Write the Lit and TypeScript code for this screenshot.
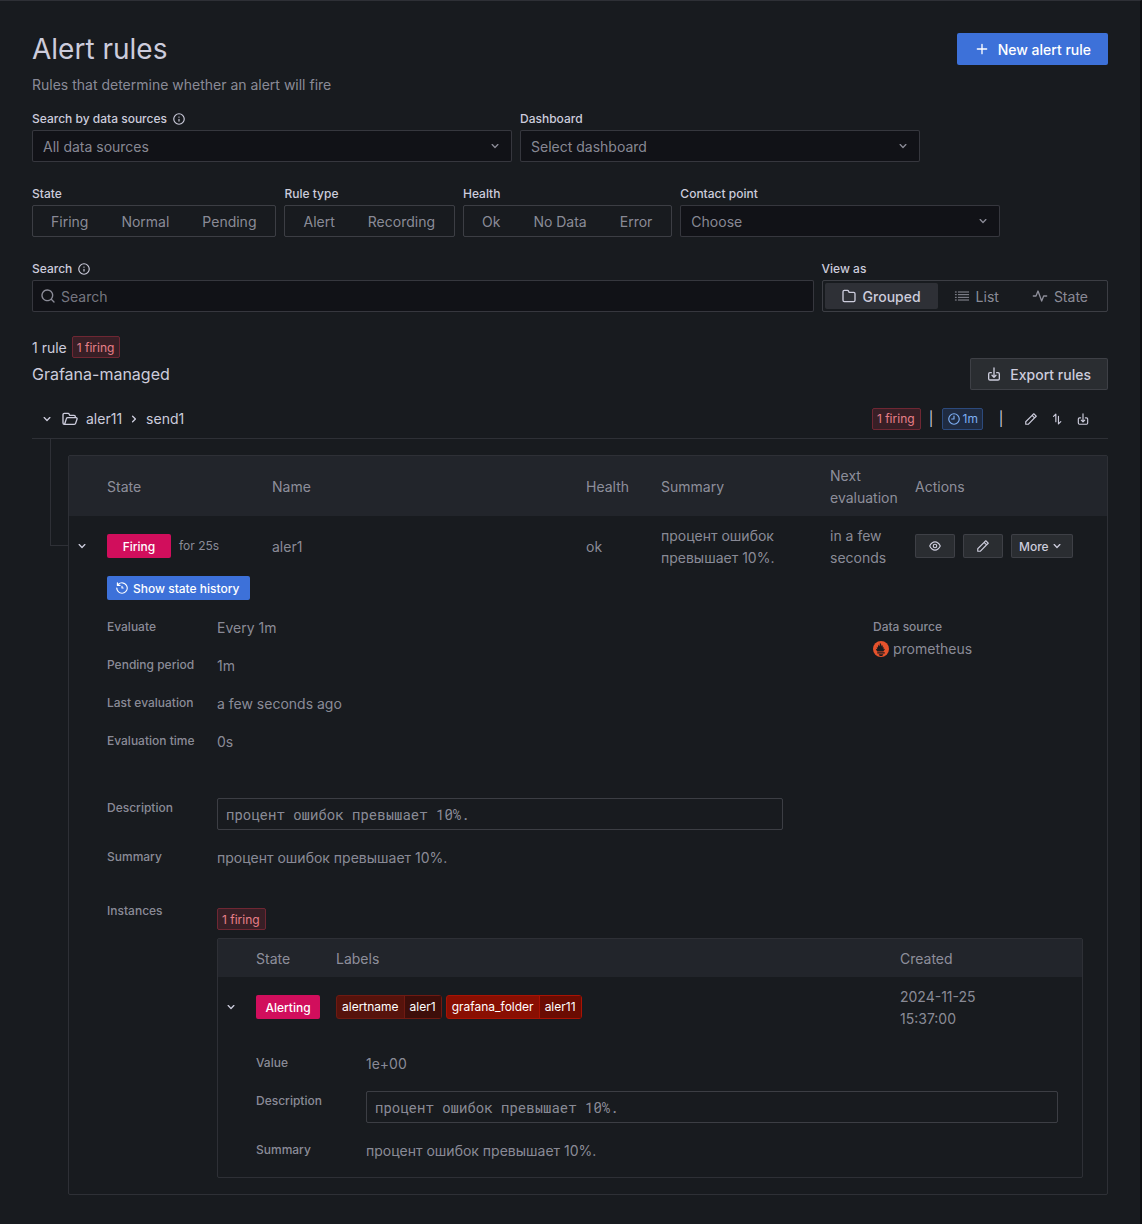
import { LitElement, html, css, svg } from "lit";
import { customElement, property } from "lit/decorators.js";

const GLYPHS: Record<string, unknown> = {
  plus: svg`<path d="M19,11H13V5a1,1,0,0,0-2,0v6H5a1,1,0,0,0,0,2h6v6a1,1,0,0,0,2,0V13h6a1,1,0,0,0,0-2Z"/>`,
  down: svg`<path d="M17,9.17a1,1,0,0,0-1.41,0L12,12.71,8.46,9.17a1,1,0,0,0-1.41,0,1,1,0,0,0,0,1.42l4.24,4.24a1,1,0,0,0,1.42,0L17,10.59A1,1,0,0,0,17,9.17Z"/>`,
  right: svg`<path d="M14.83,11.29,10.59,7.05a1,1,0,0,0-1.42,0,1,1,0,0,0,0,1.41L12.71,12,9.17,15.54a1,1,0,0,0,0,1.41,1,1,0,0,0,.71.29,1,1,0,0,0,.71-.29l4.24-4.24A1,1,0,0,0,14.83,11.29Z"/>`,
  info: svg`<path d="M12,2A10,10,0,1,0,22,12,10,10,0,0,0,12,2Zm0,18a8,8,0,1,1,8-8A8,8,0,0,1,12,20Zm0-8.5a1,1,0,0,0-1,1v3a1,1,0,0,0,2,0v-3A1,1,0,0,0,12,11.5Zm0-4a1.25,1.25,0,1,0,1.25,1.25A1.25,1.25,0,0,0,12,7.5Z"/>`,
  search: svg`<path d="M21.71,20.29,18,16.61A9,9,0,1,0,16.61,18l3.68,3.68a1,1,0,0,0,1.42,0A1,1,0,0,0,21.71,20.29ZM11,18a7,7,0,1,1,7-7A7,7,0,0,1,11,18Z"/>`,
  folder: svg`<path d="M19,5.5H12.72l-.32-1a3,3,0,0,0-2.84-2H5a3,3,0,0,0-3,3v13a3,3,0,0,0,3,3H19a3,3,0,0,0,3-3V8.5A3,3,0,0,0,19,5.5Zm1,13a1,1,0,0,1-1,1H5a1,1,0,0,1-1-1V5.5a1,1,0,0,1,1-1H9.56a1,1,0,0,1,.95.68l.54,1.64A1,1,0,0,0,12,7.5h7a1,1,0,0,1,1,1Z"/>`,
  folderOpen: svg`<g class="stroke"><path d="M20 10V8.500a2 2 0 0 0-2-2h-6.500L10.600 4.400a1.500 1.500 0 0 0-1.400-.9H3.500a2 2 0 0 0-2 2v12.500a2 2 0 0 0 2 2h15a2 2 0 0 0 1.900-1.400L22.600 12a1.500 1.500 0 0 0-1.400-2H8.500a2 2 0 0 0-1.900 1.400L4 19.600"/></g>`,
  list: svg`<g class="stroke thin"><path d="M6.500 6H22M6.500 10H22M6.500 14H22M6.500 18H22M2 6H3.500M2 10H3.500M2 14H3.500M2 18H3.500"/></g>`,
  pulse: svg`<g class="stroke"><path d="M2 12H6L9 4.500L14.500 19.500L17.500 12H22"/></g>`,
  pen: svg`<path d="M22,7.24a1,1,0,0,0-.29-.71L17.47,2.29A1,1,0,0,0,16.76,2a1,1,0,0,0-.71.29L13.22,5.12h0L2.29,16.05a1,1,0,0,0-.29.71V21a1,1,0,0,0,1,1H7.24A1,1,0,0,0,8,21.71L18.87,10.78h0L21.71,8a1.19,1.19,0,0,0,.22-.33,1,1,0,0,0,0-.24.7.7,0,0,0,0-.14ZM6.83,20H4V17.17l9.93-9.93,2.83,2.83ZM18.17,8.66,15.34,5.83l1.42-1.41,2.82,2.82Z"/>`,
  clock: svg`<path d="M12,2A10,10,0,1,0,22,12,10,10,0,0,0,12,2Zm0,18a8,8,0,1,1,8-8A8,8,0,0,1,12,20ZM12,6a1,1,0,0,0-1,1v4H8a1,1,0,0,0,0,2h4a1,1,0,0,0,1-1V7A1,1,0,0,0,12,6Z"/>`,
  history: svg`<path d="M12,2A10,10,0,0,0,5.12,4.77V3a1,1,0,0,0-2,0V7.5a1,1,0,0,0,1,1H8.62a1,1,0,0,0,0-2H6.22A8,8,0,1,1,4,12a1,1,0,0,0-2,0A10,10,0,1,0,12,2Zm0,6a1,1,0,0,0-1,1v3a1,1,0,0,0,1,1h2a1,1,0,0,0,0-2H13V9A1,1,0,0,0,12,8Z"/>`,
  eye: svg`<path d="M21.92,11.6C19.9,6.91,16.1,4,12,4S4.1,6.91,2.08,11.6a1,1,0,0,0,0,.8C4.1,17.09,7.9,20,12,20s7.9-2.91,9.92-7.6A1,1,0,0,0,21.92,11.6ZM12,18c-3.17,0-6.17-2.29-7.9-6C5.83,8.29,8.83,6,12,6s6.17,2.29,7.9,6C18.17,15.71,15.17,18,12,18ZM12,8a4,4,0,1,0,4,4A4,4,0,0,0,12,8Zm0,6a2,2,0,1,1,2-2A2,2,0,0,1,12,14Z"/>`,
  download: svg`<path d="M8.29,13.29a1,1,0,0,0,0,1.42l3,3a1,1,0,0,0,1.42,0l3-3a1,1,0,0,0-1.42-1.42L13,14.59V3a1,1,0,0,0-2,0V14.59L9.71,13.29A1,1,0,0,0,8.29,13.29ZM18,9H16a1,1,0,0,0,0,2h2a1,1,0,0,1,1,1v7a1,1,0,0,1-1,1H6a1,1,0,0,1-1-1V12a1,1,0,0,1,1-1H8A1,1,0,0,0,8,9H6a3,3,0,0,0-3,3v7a3,3,0,0,0,3,3H18a3,3,0,0,0,3-3V12A3,3,0,0,0,18,9Z"/>`,
  swap: svg`<g class="stroke"><path d="M6 7.500L10 3.500V16.500M18.500 16.500L14.500 20.500V7.500"/></g>`,
  prometheus: svg`<circle cx="12" cy="12" r="12" fill="#e6522c"/><path fill="#181b1f" d="M12 22.400c-1.900 0-3.400-1.200-3.400-2.700h6.800c0 1.500-1.500 2.700-3.400 2.700zM6.400 18.700v-2h11.200v2zM6.400 15.600c-1.600-1.800-2-2.800-2.300-3.800l2.400.5c-.6-1.400-1-2.500-.8-4 .4.900 1 1.500 1.700 1.800-.2-2.300.9-3.200.8-5 .9.700 1.400 2 1.400 3.200.5-1.700.8-3.200.7-5.700 1.700 1.300 2.500 3.700 2.500 5.800.5-.8.700-1.700.6-2.800 1.300 1.300 1.400 3 1.400 4.700.6-.4 1.100-1 1.400-1.800.3 1.400 0 2.600-.7 3.800l2.400-.5c-.3 1.100-.8 2.200-2.300 3.800z"/>`,
};

@customElement("ui-icon")
class UiIcon extends LitElement {
  @property() name = "plus";
  static styles = css`
    :host { display: inline-flex; flex: none; width: 16px; height: 16px; }
    :host([small]) { width: 14px; height: 14px; }
    svg { width: 100%; height: 100%; fill: currentColor; }
    .stroke { fill: none; stroke: currentColor; stroke-width: 2; stroke-linecap: round; stroke-linejoin: round; }
    .thin { stroke-width: 1.500; }
  `;
  render() {
    return html`<svg viewBox="0 0 24 24" aria-hidden="true">${GLYPHS[this.name]}</svg>`;
  }
}

interface Option { text: string; icon?: string; checked?: boolean }

@customElement("app-root")
class AppRoot extends LitElement {
  static styles = css`
    :host {
      --text: #ccccdc;
      --muted: rgba(204, 204, 220, 0.65);
      --weak: rgba(204, 204, 220, 0.12);
      --medium: rgba(204, 204, 220, 0.2);
      display: block;
      box-sizing: border-box;
      min-height: 100vh;
      background: #181b1f;
      color: var(--text);
      border-top: 1px solid var(--weak);
      border-right: 2px solid #0d0e11;
      font: 400 14px/22px Inter, "Liberation Sans", sans-serif;
    }
    * { box-sizing: border-box; }
    main { padding: 32px 32px 29px; }
    h1, h2, p, dl, dd, dt { margin: 0; font-weight: 400; }
    button, input, select { font: inherit; color: inherit; margin: 0; }
    button { cursor: pointer; }

    .head { display: flex; justify-content: space-between; align-items: flex-start; }
    h1 { font-size: 28px; line-height: 32px; }
    .subtitle { margin-top: 8px; line-height: 24px; color: var(--muted); }

    .btn {
      display: inline-flex; align-items: center; gap: 8px; height: 32px; padding: 0 16px 0 15px; color: var(--text);
      border: 1px solid transparent; border-radius: 2px; font-weight: 500; white-space: nowrap;
      background: rgba(204, 204, 220, 0.1);
    }
    .btn span, .radios span, .badge span { padding-top: 1px; }
    .btn.primary { background: #3d71d9; color: #fff; padding: 0 16px; }
    .btn.bordered { border-color: var(--weak); }
    .btn.small { height: 24px; padding: 0 7px; gap: 0; font-size: 12px; }
    .btn.icon-only { width: 40px; justify-content: center; }
    .btn.primary.small { padding: 0 10px 0 7px; gap: 4px; }

    .filters { display: flex; flex-wrap: wrap; gap: 8px; margin-bottom: 24px; }
    .filters.first { margin-top: 14px; }
    .filters.last { flex-wrap: nowrap; }
    .field { display: flex; flex-direction: column; border: 0; margin: 0; padding: 0; min-width: 0; }
    .w-l { width: 480px; } .w-m { width: 400px; } .w-s { width: 320px; } .grow { flex: 1; }
    .label {
      display: flex; align-items: center; gap: 5px; height: 16px; margin-bottom: 3px; padding: 0;
      font-size: 12px; line-height: 16px; font-weight: 500;
    }
    .box {
      display: flex; align-items: center; height: 32px; background: #111217; color: var(--muted);
      border: 1px solid var(--medium); border-radius: 2px;
    }
    .select { display: grid; grid-template-columns: 1fr 32px; }
    .select select {
      grid-area: 1 / 1 / 2 / 3; appearance: none; border: 0; background: none; height: 30px; padding: 1px 32px 0 10px;
    }
    .select ui-icon { grid-area: 1 / 2; justify-self: center; pointer-events: none; }
    .search { padding: 0 7px; gap: 5px; }
    .search input { flex: 1; min-width: 0; border: 0; background: none; outline: none; padding: 0; height: 30px; }
    .search input::placeholder { color: var(--muted); opacity: 0.85; }

    .radios { display: flex; padding: 2px; height: 32px; border: 1px solid var(--medium); border-radius: 2px; }
    .radios label {
      display: flex; flex: auto; align-items: center; gap: 6px; padding: 0 17px 0 16px; color: var(--muted);
      border-radius: 2px; white-space: nowrap; cursor: pointer;
    }
    .radios input { appearance: none; width: 0; height: 0; position: absolute; }
    .radios label:has(input:checked) { background: rgba(204, 204, 220, 0.12); color: var(--text); font-weight: 500; }

    .stats { display: flex; align-items: center; gap: 5px; height: 22px; }
    .stats > span:first-child { padding-top: 1px; }
    .badge {
      display: inline-flex; align-items: center; gap: 2px; height: 22px; padding: 0 5px 0 4px; border-radius: 2px;
      font-size: 12px; line-height: 16px; white-space: nowrap;
      color: #e8808a; background: #381f26; border: 1px solid #6f2733;
    }
    .badge.blue { padding: 0 4px; color: #7eb0f5; background: #1f2b41; border-color: #2c4a7c; }
    .section { display: flex; justify-content: space-between; align-items: flex-start; }
    h2 { font-size: 16px; line-height: 24px; margin-top: 4px; }

    .group {
      display: flex; align-items: center; height: 40px; padding: 0 17px 0 7px; margin-top: 9px;
      border-bottom: 1px solid var(--weak);
    }
    .group .spacer { flex: 1; }
    .toggle, .tool {
      display: inline-flex; align-items: center; justify-content: center; border: 0; padding: 0; background: none;
      width: 16px; height: 16px; color: var(--text);
    }
    .group a { color: inherit; text-decoration: none; }
    .crumbs { display: flex; align-items: center; gap: 4px; margin-left: 7px; }
    .crumbs .path { margin-left: 4px; }
    .right { display: flex; align-items: center; }
    .tools { display: flex; gap: 10px; }
    .bar { width: 21px; text-align: center; }
    .bar.wide { width: 40px; padding-right: 4px; }

    .tree { display: grid; grid-template-columns: 18px 18px minmax(0, 1fr); }
    .guide { grid-column: 2; height: 107px; border: 1px solid var(--weak); border-width: 0 0 1px 1px; }
    .panel { border: 1px solid var(--weak); border-radius: 2px; }
    .outer { grid-column: 3; margin-top: 16px; padding-bottom: 16px; }
    table { width: 100%; table-layout: fixed; border-collapse: collapse; color: var(--muted); }
    th, td { padding: 8px 0; text-align: left; font-weight: 400; vertical-align: middle; }
    th, td.words { padding: 9px 8px 7px 0; }
    th { background: #22252b; }
    .c-toggle { width: 38px; } .c-state { width: 165px; } .c-health { width: 75px; } .c-summary { width: 169px; }
    .c-next { width: 85px; } .c-actions { width: 192px; } .c-istate { width: 80px; } .c-created { width: 182px; }
    td .toggle { display: flex; margin-left: 5px; }
    .row { display: flex; align-items: center; gap: 8px; }
    .fine { font-size: 12px; line-height: 18px; }
    .tag {
      display: inline-flex; align-items: center; justify-content: center; min-width: 64px; height: 24px; padding: 1px 8px 0;
      border-radius: 2px; background: #d10e5c; color: #fff; font-size: 12px; font-weight: 500; vertical-align: top;
    }
    td.details { padding: 0 24px 0 0; vertical-align: top; }
    .split { display: grid; grid-template-columns: minmax(0, 1fr) 210px; gap: 90px; margin-top: 16px; }
    dl.info { display: grid; grid-template-columns: 110px minmax(0, 1fr); row-gap: 16px; }
    dt { font-size: 12px; line-height: 20px; font-weight: 500; }
    dl.texts { margin-top: 45px; }
    dl.instances { margin-top: 32px; }
    .instances .count { display: flex; margin-top: 7px; }
    .well {
      display: block; height: 32px; margin-bottom: 1px; padding: 0 8px; line-height: 32px;
      border: 1px solid var(--medium); border-radius: 2px; font-family: "Roboto Mono", "DejaVu Sans Mono", monospace;
    }
    .inner { margin-top: 8px; padding-bottom: 15px; }
    .source { display: flex; align-items: center; gap: 4px; margin-top: 1px; }
    .labels { display: flex; gap: 4px; }
    .chip {
      display: inline-flex; height: 24px; border: 1px solid #6f1a12; border-radius: 3px; color: #fff;
      font-size: 12px; line-height: 22px; background: #56130c;
    }
    .chip span { padding: 0 5px; }
    .chip .val { border-left: 1px solid #6f1a12; background: #3d0e0a; }
    .chip.hot { background: #890f02; border-color: #a91304; }
    .chip.hot .val { background: #6a0c02; border-color: #a91304; }
    .inst-info { margin: 16px 0 0; }
  `;

  private select(id: string, label: string, value: string, width: string, info = false) {
    return html`<div class="field ${width}">
      <label class="label" for=${id}>${label}${info ? html`<ui-icon small name="info"></ui-icon>` : ""}</label>
      <div class="box select"><select id=${id}><option>${value}</option></select><ui-icon name="down"></ui-icon></div>
    </div>`;
  }

  private radios(name: string, legend: string, options: Option[]) {
    return html`<fieldset class="field">
      <legend class="label">${legend}</legend>
      <div class="radios">
        ${options.map((o) => html`<label>
          <input type="radio" name=${name} ?checked=${o.checked} />${o.icon ? html`<ui-icon name=${o.icon}></ui-icon>` : ""}<span>${o.text}</span>
        </label>`)}
      </div>
    </fieldset>`;
  }

  render() {
    const text = "процент ошибок превышает 10%.";
    return html`<main>
      <header class="head">
        <div><h1>Alert rules</h1><p class="subtitle">Rules that determine whether an alert will fire</p></div>
        <button class="btn primary"><ui-icon name="plus"></ui-icon><span>New alert rule</span></button>
      </header>

      <div class="filters first">
        ${this.select("source", "Search by data sources", "All data sources", "w-l", true)}
        ${this.select("dashboard", "Dashboard", "Select dashboard", "w-m")}
      </div>
      <div class="filters">
        ${this.radios("state", "State", [{ text: "Firing" }, { text: "Normal" }, { text: "Pending" }])}
        ${this.radios("type", "Rule type", [{ text: "Alert" }, { text: "Recording" }])}
        ${this.radios("health", "Health", [{ text: "Ok" }, { text: "No Data" }, { text: "Error" }])}
        ${this.select("contact", "Contact point", "Choose", "w-s")}
      </div>
      <div class="filters last">
        <div class="field grow">
          <label class="label" for="query">Search<ui-icon small name="info"></ui-icon></label>
          <div class="box search"><ui-icon name="search"></ui-icon><input id="query" type="text" placeholder="Search" /></div>
        </div>
        ${this.radios("view", "View as", [
          { text: "Grouped", icon: "folder", checked: true },
          { text: "List", icon: "list" },
          { text: "State", icon: "pulse" },
        ])}
      </div>

      <div class="stats"><span>1 rule</span><span class="badge"><span>1 firing</span></span></div>
      <div class="section">
        <h2>Grafana-managed</h2>
        <button class="btn bordered"><ui-icon name="download"></ui-icon><span>Export rules</span></button>
      </div>

      <div class="group">
        <button class="toggle" aria-label="Collapse group"><ui-icon name="down"></ui-icon></button>
        <nav class="crumbs">
          <ui-icon name="folderOpen"></ui-icon><a class="path" href="#folder">aler11</a>
          <ui-icon name="right"></ui-icon><a href="#group">send1</a>
        </nav>
        <span class="spacer"></span>
        <div class="right">
          <span class="badge">1 firing</span><span class="bar">|</span>
          <span class="badge blue"><ui-icon small name="clock"></ui-icon>1m</span><span class="bar wide">|</span>
          <div class="tools">
            <button class="tool" aria-label="Edit group"><ui-icon small name="pen"></ui-icon></button>
            <button class="tool" aria-label="Reorder rules"><ui-icon small name="swap"></ui-icon></button>
            <button class="tool" aria-label="Export group"><ui-icon small name="download"></ui-icon></button>
          </div>
        </div>
      </div>

      <div class="tree">
        <div class="guide"></div>
        <div class="panel outer">
          <table>
            <colgroup><col class="c-toggle" /><col class="c-state" /><col /><col class="c-health" /><col class="c-summary" /><col class="c-next" /><col class="c-actions" /></colgroup>
            <thead><tr><th></th><th>State</th><th>Name</th><th>Health</th><th>Summary</th><th>Next evaluation</th><th>Actions</th></tr></thead>
            <tbody>
              <tr>
                <td><button class="toggle" aria-label="Collapse rule"><ui-icon name="down"></ui-icon></button></td>
                <td><div class="row"><span class="tag">Firing</span><span class="fine">for 25s</span></div></td>
                <td class="words">aler1</td>
                <td class="words">ok</td>
                <td class="words">${text}</td>
                <td class="words">in a few seconds</td>
                <td><div class="row">
                  <button class="btn bordered small icon-only" aria-label="View"><ui-icon small name="eye"></ui-icon></button>
                  <button class="btn bordered small icon-only" aria-label="Edit"><ui-icon small name="pen"></ui-icon></button>
                  <button class="btn bordered small"><span>More</span><ui-icon name="down"></ui-icon></button>
                </div></td>
              </tr>
              <tr>
                <td></td>
                <td class="details" colspan="6">
                  <button class="btn primary small"><ui-icon small name="history"></ui-icon><span>Show state history</span></button>
                  <div class="split">
                    <div>
                      <dl class="info">
                        <dt>Evaluate</dt><dd>Every 1m</dd>
                        <dt>Pending period</dt><dd>1m</dd>
                        <dt>Last evaluation</dt><dd>a few seconds ago</dd>
                        <dt>Evaluation time</dt><dd>0s</dd>
                      </dl>
                      <dl class="info texts">
                        <dt>Description</dt><dd><span class="well">${text}</span></dd>
                        <dt>Summary</dt><dd>${text}</dd>
                      </dl>
                    </div>
                    <dl><dt>Data source</dt><dd class="source"><ui-icon name="prometheus"></ui-icon>prometheus</dd></dl>
                  </div>
                  <dl class="info instances">
                    <dt>Instances</dt>
                    <dd>
                      <div class="count"><span class="badge"><span>1 firing</span></span></div>
                      <div class="panel inner">
                        <table>
                          <colgroup><col class="c-toggle" /><col class="c-istate" /><col /><col class="c-created" /></colgroup>
                          <thead><tr><th></th><th>State</th><th>Labels</th><th>Created</th></tr></thead>
                          <tbody>
                            <tr>
                              <td><button class="toggle" aria-label="Collapse instance"><ui-icon name="down"></ui-icon></button></td>
                              <td><span class="tag">Alerting</span></td>
                              <td><div class="labels">
                                <span class="chip"><span>alertname</span><span class="val">aler1</span></span>
                                <span class="chip hot"><span>grafana_folder</span><span class="val">aler11</span></span>
                              </div></td>
                              <td class="words">2024-11-25<br />15:37:00</td>
                            </tr>
                            <tr>
                              <td></td>
                              <td class="details" colspan="3">
                                <dl class="info inst-info">
                                  <dt>Value</dt><dd>1e+00</dd>
                                  <dt>Description</dt><dd><span class="well">${text}</span></dd>
                                  <dt>Summary</dt><dd>${text}</dd>
                                </dl>
                              </td>
                            </tr>
                          </tbody>
                        </table>
                      </div>
                    </dd>
                  </dl>
                </td>
              </tr>
            </tbody>
          </table>
        </div>
      </div>
    </main>`;
  }
}
